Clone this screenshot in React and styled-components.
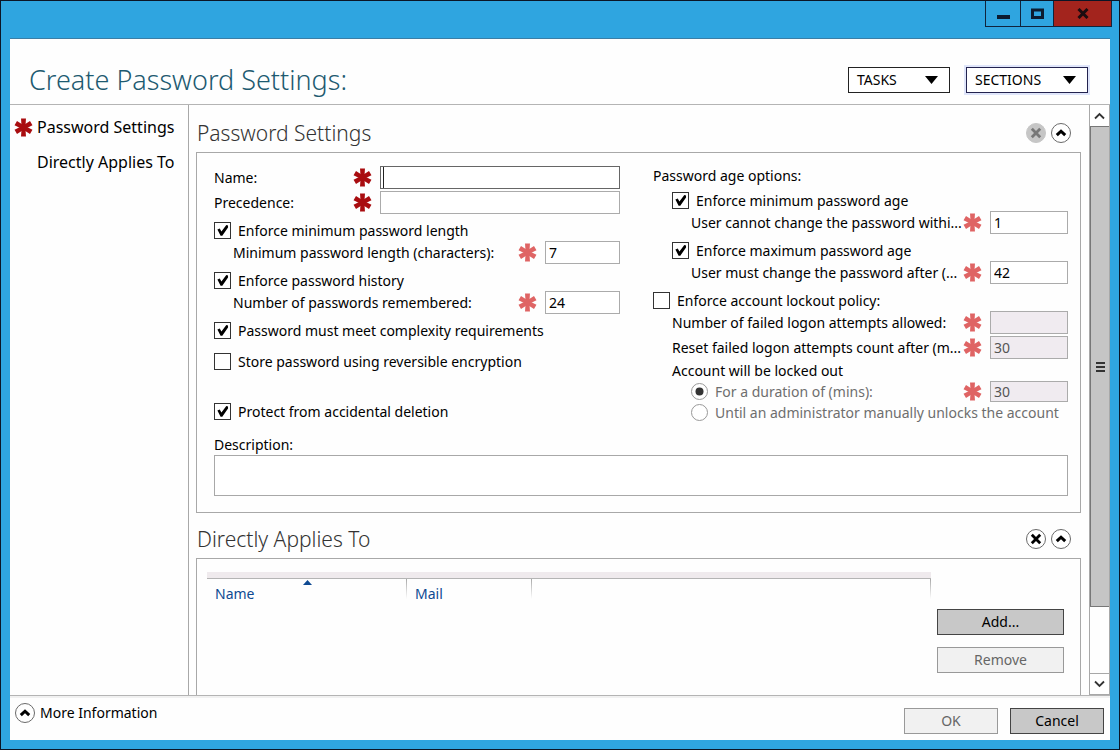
import React, { useState } from 'react';
import styled, { createGlobalStyle, css } from 'styled-components';

const GlobalStyle = createGlobalStyle`
  * {
    box-sizing: border-box;
  }

  body {
    margin: 0;
    background-color: #2fa5e0;
    color: #000;
    font-family: 'Noto Sans', 'Open Sans', sans-serif;
    font-size: 14px;
    line-height: 20px;
  }

  button, input, textarea {
    margin: 0;
    font: inherit;
    color: inherit;
  }
`;

const WindowFrame = styled.div`
  display: flex;
  flex-direction: column;
  height: 100vh;
  min-height: 700px;
  border: 1px solid #0b1526;
  background-color: #2fa5e0;
`;

const TitleBar = styled.div`
  display: flex;
  justify-content: flex-end;
  align-items: flex-start;
  height: 37px;
  padding-right: 7px;
`;

const CaptionButton = styled.button`
  display: flex;
  align-items: center;
  justify-content: center;
  width: ${({ $width }) => $width}px;
  height: 26px;
  padding: 0;
  border: 1px solid #10243c;
  border-top: 0;
  background-color: ${({ $close }) => ($close ? '#a3241d' : '#2fa5e0')};

  & + & {
    border-left: 0;
  }
`;

const Dialog = styled.form`
  display: flex;
  flex-direction: column;
  flex: 1;
  min-height: 0;
  margin: 0 9px 9px;
  border-top: 1px solid #3b7ea6;
  background-color: #fefefe;
`;

const Header = styled.header`
  display: flex;
  align-items: center;
  gap: 16px;
  height: 66px;
  padding: 16px 22px 0 19px;
  border-bottom: 1px solid #b4b4b4;
`;

const Title = styled.h1`
  flex: 1;
  margin: 0;
  color: #1d5a70;
  font-size: 27px;
  font-weight: 300;
  line-height: 32px;
`;

const MenuButton = styled.button`
  display: flex;
  align-items: center;
  justify-content: space-between;
  width: ${({ $wide }) => ($wide ? '122px' : '102px')};
  height: 26px;
  padding: 0 11px 0 8px;
  border: 1px solid #222;
  background-color: #fff;
  ${({ $focused }) => $focused && css`
    border-color: #23234f;
    box-shadow: 0 0 0 2px #dfe5fa;
  `}
`;

const Body = styled.div`
  display: flex;
  flex: 1;
  min-height: 0;
`;

const Sidebar = styled.nav`
  display: flex;
  flex-direction: column;
  gap: 13px;
  width: 179px;
  padding: 11px 0 0 4px;
  border-right: 1px solid #a8a8a8;
`;

const NavLink = styled.a`
  display: grid;
  grid-template-columns: 19px 1fr;
  align-items: center;
  gap: 4px;
  color: #000;
  font-size: 16px;
  line-height: 22px;
  text-decoration: none;
  white-space: nowrap;

  span {
    grid-column: 2;
  }
`;

const Content = styled.main`
  display: flex;
  flex-direction: column;
  flex: 1;
  min-width: 0;
  padding: 2px 8px 0 7px;
  overflow: hidden;
`;

const SectionHeader = styled.div`
  display: flex;
  flex-shrink: 0;
  align-items: center;
  gap: 5px;
  height: 45px;
  padding: 6px 10px 0 1px;
`;

const SectionTitle = styled.h2`
  flex: 1;
  margin: 0;
  color: #333;
  font-size: 21px;
  font-weight: 300;
  line-height: 28px;
`;

const RoundButton = styled.button`
  display: flex;
  align-items: center;
  justify-content: center;
  width: 20px;
  height: 20px;
  padding: 0;
  border: 1px solid #6a6a6a;
  border-radius: 50%;
  background-color: #fff;

  &:disabled {
    border-color: #c6c6c6;
    background-color: #c6c6c6;
    color: #777;
  }
`;

const Panel = styled.section`
  flex-shrink: 0;
  padding: 13px 12px 16px 17px;
  border: 1px solid #a8a8a8;
`;

const ListPanel = styled(Panel)`
  display: flex;
  flex: 1;
  gap: 6px;
  min-height: 130px;
  padding: 13px 16px 0 10px;
  border-bottom: 0;
`;

const Columns = styled.div`
  display: grid;
  grid-template-columns: 406fr 415fr;
  gap: 33px;
`;

const Column = styled.div`
  display: flex;
  flex-direction: column;
  min-width: 0;
`;

const Group = styled.div`
  display: flex;
  flex-direction: column;
  gap: ${({ $gap }) => $gap || 0}px;
  margin-top: ${({ $top }) => $top || 0}px;
  padding-left: ${({ $indent }) => $indent || 0}px;
`;

const ColumnTitle = styled.div`
  height: ${({ $tall }) => ($tall ? '22px' : '20px')};
  line-height: ${({ $tall }) => ($tall ? '24px' : '20px')};
`;

const FieldRow = styled.div`
  display: flex;
  align-items: center;
  gap: 8px;
  height: ${({ $short }) => ($short ? '21px' : '23px')};
  padding-left: ${({ $indent }) => $indent || 0}px;

  > label {
    flex: 1;
    min-width: 0;
    white-space: nowrap;
  }
`;

const TextBox = styled.input`
  width: ${({ $width }) => $width}px;
  height: 100%;
  padding: 0 3px;
  border: 1px solid #ababab;
  border-radius: 0;
  background-color: #fff;
  outline: none;

  &:disabled {
    background-color: #f0ebf0;
    color: #555;
  }

  ${({ $active }) => $active && css`
    border-color: #666;
    box-shadow: inset 2px 0 0 #fff, inset 3px 0 0 #222;
  `}
`;

const OptionLabel = styled.label`
  display: flex;
  align-items: center;
  gap: 7px;
  height: 21px;
  color: ${({ $muted }) => ($muted ? '#6e6e6e' : 'inherit')};
  white-space: nowrap;
`;

const Tick = styled.span`
  display: grid;
  width: 17px;
  height: 17px;

  > * {
    grid-area: 1 / 1;
  }

  svg {
    pointer-events: none;
  }
`;

const TickInput = styled.input`
  width: 17px;
  height: 17px;
  appearance: none;
  border: 1px solid ${({ type }) => (type === 'radio' ? '#999' : '#333')};
  border-radius: ${({ type }) => (type === 'radio' ? '50%' : '0')};
  background-color: #fff;
`;

const DescriptionLabel = styled.label`
  display: block;
  height: 20px;
  margin-top: 12px;
`;

const Description = styled.textarea`
  display: block;
  width: 100%;
  height: 41px;
  border: 1px solid #a8a8a8;
  border-radius: 0;
  background-color: #fff;
  resize: none;
`;

const TableWrap = styled.div`
  flex: 1;
`;

const Table = styled.table`
  width: 100%;
  border-top: 6px solid #efeaed;
  border-spacing: 0;
  table-layout: fixed;
`;

const HeadCell = styled.th`
  position: relative;
  width: ${({ $width }) => $width || 'auto'};
  height: 26px;
  padding: 4px 8px 0;
  border-top: 1px solid #b4b4b4;
  background: linear-gradient(#a8a8a8, #fefefe) right top / 1px 20px no-repeat;
  color: #0f4a92;
  font-weight: 400;
  text-align: left;

  svg {
    position: absolute;
    top: 0;
    left: calc(50% - 4px);
  }
`;

const ListActions = styled.div`
  display: flex;
  flex-direction: column;
  gap: 12px;
  width: 127px;
  padding-top: 37px;
`;

const PushButton = styled.button`
  width: ${({ $width }) => $width || '100%'};
  height: 26px;
  padding: 0;
  border: 1px solid #444;
  background-color: #c8c8c8;

  &:disabled {
    border-color: #999;
    background-color: #f1f1f1;
    color: #666;
  }
`;

const ScrollBar = styled.div`
  display: flex;
  flex-direction: column;
  width: 21px;
  border: 1px solid #a8a8a8;
  border-top: 0;
`;

const ScrollButton = styled.button`
  display: flex;
  align-items: center;
  justify-content: center;
  height: 21px;
  padding: 0;
  border: 0;
  background-color: #fff;
  ${({ $end }) => $end && 'border-top: 1px solid #a8a8a8;'}
`;

const ScrollTrack = styled.div`
  flex: 1;
`;

const ScrollThumb = styled.div`
  display: flex;
  align-items: center;
  justify-content: center;
  height: 88%;
  border: 1px solid #777;
  border-right: 0;
  background-color: #c5c5c5;
`;

const Footer = styled.footer`
  display: flex;
  align-items: center;
  gap: 12px;
  height: 45px;
  padding: 5px 6px 0 5px;
  border-top: 1px solid #b4b4b4;
  box-shadow: inset 0 2px 0 #f1f1f1;
`;

const MoreInfo = styled.button`
  display: flex;
  align-items: center;
  align-self: flex-start;
  gap: 5px;
  height: 24px;
  margin-right: auto;
  padding: 0;
  border: 0;
  background: none;
`;

const RoundMark = styled.span`
  display: flex;
  align-items: center;
  justify-content: center;
  width: 20px;
  height: 20px;
  border: 1px solid #6a6a6a;
  border-radius: 50%;
`;

const Required = ({ faded }) => (
  <svg width="19" height="19" viewBox="-10 -10 20 20" aria-hidden="true">
    <g fill={faded ? '#df6464' : '#a90d10'}>
      {[0, 60, 120].map((angle) => (
        <path
          key={angle}
          d="M-2.6 -9.4H2.6L2 0L2.6 9.4H-2.6L-2 0Z"
          transform={`rotate(${angle})`}
        />
      ))}
    </g>
  </svg>
);

const Chevron = () => (
  <svg width="12" height="12" viewBox="0 0 12 12" fill="none" stroke="#000" strokeWidth="3">
    <path d="M1.8 8.2L6 4.2L10.2 8.2" />
  </svg>
);

const Cross = () => (
  <svg width="12" height="12" viewBox="0 0 12 12" fill="none" stroke="currentColor" strokeWidth="2.8">
    <path d="M1.8 1.8L10.2 10.2M10.2 1.8L1.8 10.2" />
  </svg>
);

const DropArrow = () => (
  <svg width="13" height="8" viewBox="0 0 13 8">
    <path d="M0 0H13L6.5 8Z" fill="#000" />
  </svg>
);

function CheckOption({ label, defaultChecked }) {
  const [checked, setChecked] = useState(Boolean(defaultChecked));

  return (
    <OptionLabel>
      <Tick>
        <TickInput
          type="checkbox"
          checked={checked}
          onChange={(e) => setChecked(e.target.checked)}
        />
        {checked && (
          <svg width="17" height="17" viewBox="0 0 16 16">
            <path d="M3.2 7L5.4 6.2L7 9L11.6 2.8L13.2 3.2V5.2L7.8 13H6.2Z" fill="#000" />
          </svg>
        )}
      </Tick>
      {label}
    </OptionLabel>
  );
}

function RadioOption({ label, checked }) {
  return (
    <OptionLabel $muted>
      <Tick>
        <TickInput type="radio" name="lockout" defaultChecked={checked} disabled />
        {checked && (
          <svg width="17" height="17" viewBox="0 0 17 17">
            <circle cx="8.5" cy="8.5" r="4" fill="#333" />
          </svg>
        )}
      </Tick>
      {label}
    </OptionLabel>
  );
}

function Field({
  id, label, value, width, indent, faded, disabled, active,
}) {
  return (
    <FieldRow $indent={indent}>
      <label htmlFor={id}>{label}</label>
      <Required faded={faded} />
      <TextBox
        id={id}
        type="text"
        defaultValue={value}
        disabled={disabled}
        $width={width}
        $active={active}
      />
    </FieldRow>
  );
}

export default function App() {
  return (
    <>
      <GlobalStyle />
      <WindowFrame>
        <TitleBar>
          <CaptionButton type="button" aria-label="Minimize" $width={36}>
            <svg width="13" height="12" viewBox="0 0 13 12">
              <path d="M0 7H13V11H0Z" fill="#0c1c30" />
            </svg>
          </CaptionButton>
          <CaptionButton type="button" aria-label="Maximize" $width={33}>
            <svg width="13" height="11" viewBox="0 0 13 11">
              <path d="M1.5 2H11.5V9.5H1.5Z" fill="none" stroke="#0c1c30" strokeWidth="3" />
            </svg>
          </CaptionButton>
          <CaptionButton type="button" aria-label="Close" $width={58} $close>
            <svg width="12" height="11" viewBox="0 0 12 11">
              <path d="M1.5 1L10.5 10M10.5 1L1.5 10" stroke="#1c0c10" strokeWidth="3" />
            </svg>
          </CaptionButton>
        </TitleBar>

        <Dialog onSubmit={(e) => e.preventDefault()}>
          <Header>
            <Title>Create Password Settings:</Title>
            <MenuButton type="button">
              TASKS
              <DropArrow />
            </MenuButton>
            <MenuButton type="button" $wide $focused>
              SECTIONS
              <DropArrow />
            </MenuButton>
          </Header>

          <Body>
            <Sidebar>
              <NavLink href="#settings">
                <Required />
                <span>Password Settings</span>
              </NavLink>
              <NavLink href="#applies">
                <span>Directly Applies To</span>
              </NavLink>
            </Sidebar>

            <Content>
              <SectionHeader>
                <SectionTitle id="settings">Password Settings</SectionTitle>
                <RoundButton type="button" aria-label="Remove section" disabled>
                  <Cross />
                </RoundButton>
                <RoundButton type="button" aria-label="Collapse section">
                  <Chevron />
                </RoundButton>
              </SectionHeader>
              <Panel>
                <Columns>
                  <Column>
                    <Group $gap={2}>
                      <Field id="name" label="Name:" width={240} active />
                      <Field id="precedence" label="Precedence:" width={240} />
                    </Group>
                    <Group $top={6}>
                      <CheckOption label="Enforce minimum password length" defaultChecked />
                      <Field id="minLength" label="Minimum password length (characters):" value="7" width={75} indent={19} faded />
                    </Group>
                    <Group $top={6}>
                      <CheckOption label="Enforce password history" defaultChecked />
                      <Field id="history" label="Number of passwords remembered:" value="24" width={75} indent={19} faded />
                    </Group>
                    <Group $top={6} $gap={10}>
                      <CheckOption label="Password must meet complexity requirements" defaultChecked />
                      <CheckOption label="Store password using reversible encryption" />
                    </Group>
                    <Group $top={29}>
                      <CheckOption label="Protect from accidental deletion" defaultChecked />
                    </Group>
                  </Column>

                  <Column>
                    <ColumnTitle>Password age options:</ColumnTitle>
                    <Group $top={4} $indent={19}>
                      <CheckOption label="Enforce minimum password age" defaultChecked />
                      <Field id="minAge" label="User cannot change the password withi..." value="1" width={78} indent={19} faded />
                    </Group>
                    <Group $top={6} $indent={19}>
                      <CheckOption label="Enforce maximum password age" defaultChecked />
                      <Field id="maxAge" label="User must change the password after (..." value="42" width={78} indent={19} faded />
                    </Group>
                    <Group $top={6}>
                      <CheckOption label="Enforce account lockout policy:" />
                    </Group>
                    <Group $gap={2} $indent={19}>
                      <Field id="attempts" label="Number of failed logon attempts allowed:" width={78} faded disabled />
                      <Field id="reset" label="Reset failed logon attempts count after (m..." value="30" width={78} faded disabled />
                    </Group>
                    <Group $indent={19}>
                      <ColumnTitle $tall>Account will be locked out</ColumnTitle>
                      <FieldRow $short $indent={19}>
                        <RadioOption label="For a duration of (mins):" checked />
                        <Required faded />
                        <TextBox type="text" aria-label="Lockout duration" defaultValue="30" disabled $width={78} />
                      </FieldRow>
                      <FieldRow $short $indent={19}>
                        <RadioOption label="Until an administrator manually unlocks the account" />
                      </FieldRow>
                    </Group>
                  </Column>
                </Columns>
                <DescriptionLabel htmlFor="description">Description:</DescriptionLabel>
                <Description id="description" />
              </Panel>

              <SectionHeader>
                <SectionTitle id="applies">Directly Applies To</SectionTitle>
                <RoundButton type="button" aria-label="Remove section">
                  <Cross />
                </RoundButton>
                <RoundButton type="button" aria-label="Collapse section">
                  <Chevron />
                </RoundButton>
              </SectionHeader>
              <ListPanel>
                <TableWrap>
                  <Table>
                    <thead>
                      <tr>
                        <HeadCell $width="200px">
                          Name
                          <svg width="9" height="6" viewBox="0 0 9 6">
                            <path d="M0 6L4.5 1L9 6Z" fill="#0f4a92" />
                          </svg>
                        </HeadCell>
                        <HeadCell $width="125px">Mail</HeadCell>
                        <HeadCell aria-label="Other" />
                      </tr>
                    </thead>
                  </Table>
                </TableWrap>
                <ListActions>
                  <PushButton type="button">Add...</PushButton>
                  <PushButton type="button" disabled>Remove</PushButton>
                </ListActions>
              </ListPanel>
            </Content>

            <ScrollBar>
              <ScrollButton type="button" aria-label="Scroll up">
                <svg width="11" height="8" viewBox="0 0 11 8" fill="none" stroke="#333" strokeWidth="1.8">
                  <path d="M1 6.5L5.5 2L10 6.5" />
                </svg>
              </ScrollButton>
              <ScrollTrack>
                <ScrollThumb>
                  <svg width="9" height="10" viewBox="0 0 9 10">
                    <path d="M0 0H9V2H0ZM0 4H9V6H0ZM0 8H9V10H0Z" fill="#333" />
                  </svg>
                </ScrollThumb>
              </ScrollTrack>
              <ScrollButton type="button" aria-label="Scroll down" $end>
                <svg width="11" height="8" viewBox="0 0 11 8" fill="none" stroke="#333" strokeWidth="1.8">
                  <path d="M1 1.5L5.5 6L10 1.5" />
                </svg>
              </ScrollButton>
            </ScrollBar>
          </Body>

          <Footer>
            <MoreInfo type="button">
              <RoundMark>
                <Chevron />
              </RoundMark>
              More Information
            </MoreInfo>
            <PushButton type="submit" $width="94px" disabled>OK</PushButton>
            <PushButton type="button" $width="94px">Cancel</PushButton>
          </Footer>
        </Dialog>
      </WindowFrame>
    </>
  );
}
